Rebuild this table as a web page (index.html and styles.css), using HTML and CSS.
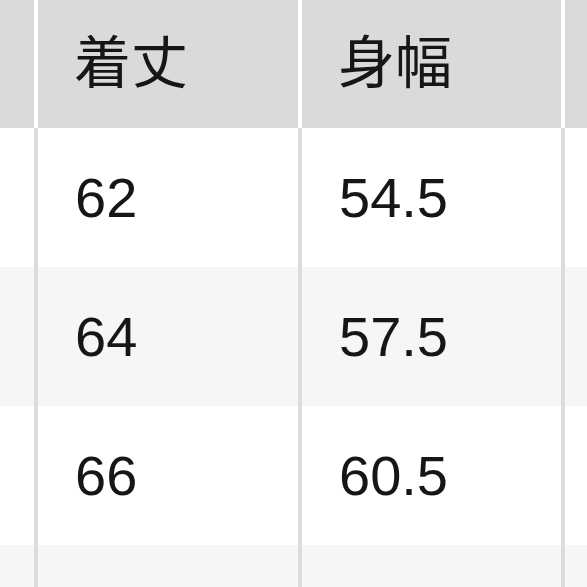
FILE: index.html
```html
<!DOCTYPE html>
<html lang="ja">
<head>
<meta charset="utf-8">
<link rel="stylesheet" href="styles.css">
</head>
<body>
<div class="sheet">
  <div class="row head">
    <div class="cell edge"></div>
    <div class="cell">着丈</div>
    <div class="cell">身幅</div>
    <div class="cell"></div>
  </div>
  <div class="row odd">
    <div class="cell edge"></div>
    <div class="cell">62</div>
    <div class="cell">54.5</div>
    <div class="cell"></div>
  </div>
  <div class="row even">
    <div class="cell edge"></div>
    <div class="cell">64</div>
    <div class="cell">57.5</div>
    <div class="cell"></div>
  </div>
  <div class="row odd">
    <div class="cell edge"></div>
    <div class="cell">66</div>
    <div class="cell">60.5</div>
    <div class="cell"></div>
  </div>
  <div class="row even short">
    <div class="cell edge"></div>
    <div class="cell"></div>
    <div class="cell"></div>
    <div class="cell"></div>
  </div>
</div>
</body>
</html>
```

FILE: styles.css
```css
html, body {
  margin: 0;
  padding: 0;
  background: #ffffff;
}
body {
  width: 587px;
  height: 587px;
  overflow: hidden;
  font-family: "Liberation Sans", "Noto Sans CJK JP", sans-serif;
  color: #161616;
}
.sheet {
  display: flex;
  flex-direction: column;
}
.row {
  display: grid;
  grid-template-columns: 34px 264px 263px 1fr;
  height: 139px;
}
.row.short {
  height: 42px;
}
.head {
  height: 128px;
  background: #dadada;
}
.even {
  background: #f6f6f6;
}
.cell {
  display: flex;
  align-items: center;
  padding-left: 37px;
  font-size: 56px;
  border-left: 4px solid #dcdcdc;
}
.cell.edge {
  border-left: none;
  padding-left: 0;
}
.head .cell {
  border-left-color: #ffffff;
  padding-left: 36px;
  padding-bottom: 12px;
  font-size: 57px;
  font-family: "Noto Sans CJK JP", sans-serif;
  font-weight: 400;
}
```
